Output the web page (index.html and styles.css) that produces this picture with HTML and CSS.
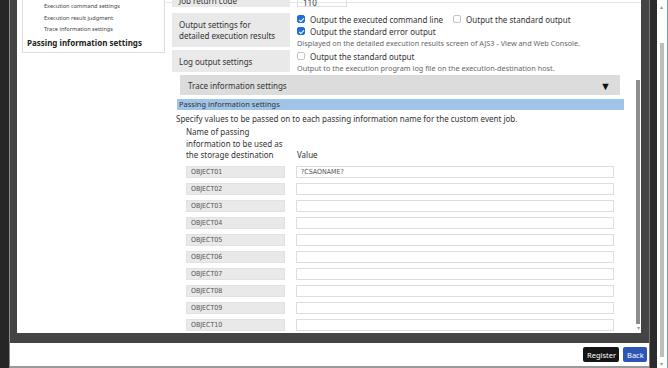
FILE: index.html
```html
<!DOCTYPE html>
<html lang="en">
<head>
    <meta charset="UTF-8">
    <title>Custom event job - Passing information settings</title>
    <link rel="stylesheet" href="styles.css">
</head>
<body>
    <div class="shell">
        <div class="edge-left"></div>
        <div class="dialog">
            <div class="frame">
                <div class="content">
                    <!-- Side navigation -->
                    <div class="side">
                        <div class="side-nav">
                            <div class="side-item">Execution command settings</div>
                            <div class="side-item">Execution result judgment</div>
                            <div class="side-item">Trace information settings</div>
                            <div class="side-item current">Passing information settings</div>
                        </div>
                    </div>

                    <div class="main">
                        <div class="form">
                            <div class="row first">
                                <div class="label">Job return code</div>
                                <div class="value"><div class="short-input">110</div></div>
                            </div>

                            <div class="row">
                                <div class="label tall">Output settings for<br>detailed execution results</div>
                                <div class="value">
                                    <div class="check-line">
                                        <label class="check"><span class="box checked"></span>Output the executed command line</label>
                                        <label class="check"><span class="box"></span>Output the standard output</label>
                                    </div>
                                    <div class="check-line">
                                        <label class="check"><span class="box checked"></span>Output the standard error output</label>
                                    </div>
                                    <div class="note">Displayed on the detailed execution results screen of AJS3 - View and Web Console.</div>
                                </div>
                            </div>

                            <div class="row">
                                <div class="label mid">Log output settings</div>
                                <div class="value">
                                    <div class="check-line">
                                        <label class="check"><span class="box"></span>Output the standard output</label>
                                    </div>
                                    <div class="note">Output to the execution program log file on the execution-destination host.</div>
                                </div>
                            </div>

                            <div class="collapse-bar">
                                <span>Trace information settings</span>
                                <span class="arrow">&#9660;</span>
                            </div>

                            <div class="section-head">Passing information settings</div>
                            <p class="intro">Specify values to be passed on to each passing information name for the custom event job.</p>

                            <div class="pass-head">
                                <div class="pass-name">Name of passing<br>information to be used as<br>the storage destination</div>
                                <div class="pass-value">Value</div>
                            </div>

                            <div id="pass-rows"></div>
                        </div>

                        <div class="inner-scroll">
                            <div class="inner-thumb"></div>
                            <div class="inner-arrow">&#9662;</div>
                        </div>
                    </div>
                </div>
            </div>
            <div class="footer">
                <button class="btn dark">Register</button>
                <button class="btn blue">Back</button>
            </div>
        </div>
        <div class="edge-right"></div>
        <div class="page-scroll">
            <div class="page-arrow">&#9652;</div>
            <div class="page-thumb"></div>
            <div class="page-arrow">&#9662;</div>
        </div>
    </div>

    <script>
        var values = ['?CSAONAME?', '', '', '', '', '', '', '', '', ''];
        var rows = document.getElementById('pass-rows');
        values.forEach(function (val, i) {
            var row = document.createElement('div');
            row.className = 'pass-row';
            var name = document.createElement('div');
            name.className = 'pass-label';
            name.textContent = 'OBJECT' + String(i + 1).padStart(2, '0');
            var input = document.createElement('div');
            input.className = 'pass-input';
            input.textContent = val;
            row.appendChild(name);
            row.appendChild(input);
            rows.appendChild(row);
        });
    </script>
</body>
</html>
```

FILE: styles.css
```css
body {
    margin: 0;
    padding: 0;
    width: 668px;
    height: 368px;
    overflow: hidden;
    background-color: #ffffff;
    font-family: 'Noto Sans', 'Open Sans', sans-serif;
    color: #333333;
}

.shell {
    display: flex;
    height: 368px;
}

.edge-left {
    width: 9px;
    background-color: #262626;
    border-right: 1px solid #8a8a8a;
}

.edge-right {
    width: 7px;
    background-color: #2b2b2b;
    border-left: 1px solid #777777;
}

.dialog {
    width: 640px;
    display: flex;
    flex-direction: column;
    border-bottom: 2px solid #9a9a9a;
}

.frame {
    height: 343px;
    background-color: #444444;
    padding: 0 8px 10px 7px;
    box-sizing: border-box;
}

.content {
    height: 333px;
    background-color: #ffffff;
    display: flex;
    overflow: hidden;
}

/* Side navigation */
.side {
    width: 148px;
    padding-left: 5px;
    box-sizing: border-box;
}

.side-nav {
    border: 1px solid #dddddd;
    border-top: none;
    height: 53px;
    padding-top: 1px;
    box-sizing: border-box;
}

.side-item {
    font-size: 5.6px;
    color: #444444;
    padding-left: 21px;
    height: 11.5px;
    line-height: 11.5px;
}

.side-item.current {
    font-size: 8px;
    font-weight: bold;
    color: #222222;
    padding-left: 4px;
    height: 13px;
    line-height: 13px;
}

/* Main form */
.main {
    flex: 1;
    display: flex;
    padding-left: 7px;
    border-top: 1px solid #e6e6e6;
    margin-top: 2px;
}

.form {
    width: 459px;
    margin-top: -14px;
}

.row {
    display: flex;
    margin-bottom: 3px;
}

.row.first {
    margin-bottom: 6px;
}

.label {
    width: 118px;
    height: 18px;
    background-color: #e9e9e9;
    font-size: 8px;
    line-height: 11px;
    padding: 0 7px;
    box-sizing: border-box;
    display: flex;
    align-items: center;
    flex-shrink: 0;
}

.row.first .label {
    padding-top: 5px;
}

.label.tall {
    height: 34px;
}

.label.mid {
    height: 22px;
}

.value {
    padding-left: 7px;
}

.short-input {
    width: 50px;
    height: 18px;
    border: 1px solid #e0e0e0;
    box-sizing: border-box;
    font-size: 8px;
    padding: 8px 0 0 5px;
    line-height: 10px;
}

.check-line {
    display: flex;
    height: 12px;
    align-items: center;
}

.check {
    display: flex;
    align-items: center;
    font-size: 8px;
    color: #333333;
    margin-right: 10px;
}

.box {
    width: 8px;
    height: 8px;
    border: 1px solid #c4c4c4;
    border-radius: 2px;
    box-sizing: border-box;
    margin-right: 5px;
    background-color: #ffffff;
}

.box.checked {
    border-color: #1f6fd6;
    background-color: #1f6fd6;
    position: relative;
}

.box.checked::after {
    content: '';
    position: absolute;
    left: 2px;
    top: 0.5px;
    width: 2px;
    height: 4px;
    border: solid #ffffff;
    border-width: 0 1px 1px 0;
    transform: rotate(45deg);
}

.note {
    font-size: 7.3px;
    color: #666666;
    height: 10px;
    line-height: 12px;
}

.collapse-bar {
    margin: 1px 0 4px 8px;
    width: 440px;
    height: 20px;
    background-color: #dcdcdc;
    display: flex;
    align-items: center;
    justify-content: space-between;
    padding: 0 9px 0 8px;
    box-sizing: border-box;
    font-size: 8px;
}

.collapse-bar .arrow {
    font-size: 11px;
    color: #111111;
}

.section-head {
    margin-left: 5px;
    width: 447px;
    height: 11px;
    line-height: 11px;
    background-color: #9fc4e8;
    font-size: 7.5px;
    padding-left: 2px;
    box-sizing: border-box;
}

.intro {
    margin: 3px 0 0 4px;
    font-size: 8px;
    height: 12px;
    line-height: 12px;
}

.pass-head {
    display: flex;
    align-items: flex-end;
    margin-left: 14px;
    font-size: 8px;
    line-height: 11.5px;
    margin-top: 1px;
}

.pass-name {
    width: 111px;
}

.pass-row {
    display: flex;
    margin: 5px 0 0 14px;
    height: 12px;
}

.pass-label {
    width: 99px;
    background-color: #e9e9ea;
    border: 1px solid #e2e2e2;
    box-sizing: border-box;
    font-family: 'DejaVu Sans Condensed', 'DejaVu Sans', sans-serif;
    font-size: 7px;
    line-height: 10px;
    padding-left: 4px;
    color: #555555;
}

.pass-input {
    margin-left: 11px;
    width: 318px;
    border: 1px solid #dedede;
    box-sizing: border-box;
    font-family: 'DejaVu Sans Condensed', 'DejaVu Sans', sans-serif;
    font-size: 7px;
    line-height: 10px;
    padding-left: 4px;
    color: #555555;
}

/* Scrollbars */
.inner-scroll {
    width: 5px;
    margin-left: 5px;
    display: flex;
    flex-direction: column;
    align-items: center;
}

.inner-thumb {
    margin-top: 77px;
    width: 4px;
    height: 244px;
    background-color: #8c8c8c;
}

.inner-arrow {
    font-size: 6px;
    color: #999999;
    line-height: 8px;
}

.page-scroll {
    width: 10px;
    display: flex;
    flex-direction: column;
    align-items: center;
    border-right: 1px solid #6aa0a8;
}

.page-thumb {
    flex: 1;
    width: 4px;
    margin-top: 32px;
    background-color: #bdbdbd;
}

.page-arrow {
    font-size: 6px;
    color: #999999;
    line-height: 8px;
    margin-top: 3px;
}

/* Footer */
.footer {
    flex: 1;
    display: flex;
    justify-content: flex-end;
    align-items: center;
    gap: 4px;
    padding-right: 2px;
    background-color: #ffffff;
}

.btn {
    height: 15px;
    border: none;
    border-radius: 2px;
    color: #ffffff;
    font-family: 'Noto Sans', sans-serif;
    font-size: 7.5px;
    padding: 0 4px;
}

.btn.dark {
    background-color: #141414;
    width: 36px;
}

.btn.blue {
    background-color: #2c55b6;
    width: 24px;
}
```
